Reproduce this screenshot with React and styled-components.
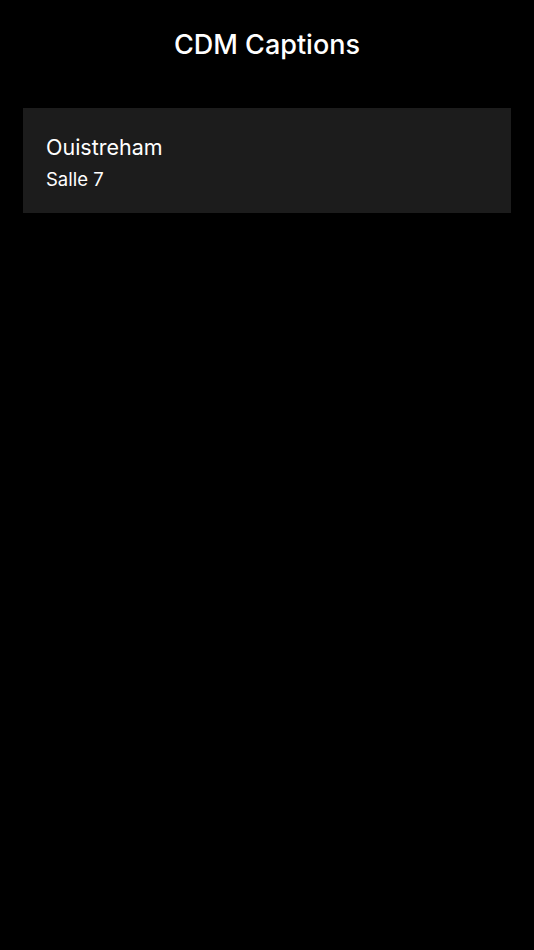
import React from "react";
import styled, { createGlobalStyle } from "styled-components";

const GlobalStyle = createGlobalStyle`
  html, body {
    margin: 0;
    padding: 0;
    background-color: #000;
  }
  body {
    font-family: Inter, "Noto Sans", "Liberation Sans", sans-serif;
    color: #fff;
    -webkit-font-smoothing: antialiased;
  }
`;

const Screen = styled.div`
  min-height: 950px;
  background-color: #000;
  padding: 0 23px;
  box-sizing: border-box;
`;

const Title = styled.h1`
  margin: 0;
  padding-top: 29px;
  height: 79px;
  box-sizing: border-box;
  text-align: center;
  font-size: 27px;
  font-weight: 500;
  line-height: 32px;
  letter-spacing: 0;
`;

const RoomList = styled.ul`
  list-style: none;
  margin: 29px 0 0;
  padding: 0;
`;

const RoomCard = styled.li`
  background-color: #1c1c1c;
  height: 105px;
  padding: 27px 23px 0;
  box-sizing: border-box;
  display: flex;
  flex-direction: column;
  gap: 8px;
`;

const RoomName = styled.span`
  font-size: 21.5px;
  line-height: 25px;
  font-weight: 400;
`;

const RoomHall = styled.span`
  font-size: 18.5px;
  line-height: 22px;
  font-weight: 400;
`;

const rooms = [{ id: 1, name: "Ouistreham", hall: "Salle 7" }];

const App = () => {
  return (
    <>
      <GlobalStyle />
      <Screen>
        <Title>CDM Captions</Title>
        <RoomList>
          {rooms.map((room) => (
            <RoomCard key={room.id}>
              <RoomName>{room.name}</RoomName>
              <RoomHall>{room.hall}</RoomHall>
            </RoomCard>
          ))}
        </RoomList>
      </Screen>
    </>
  );
};

export default App;
